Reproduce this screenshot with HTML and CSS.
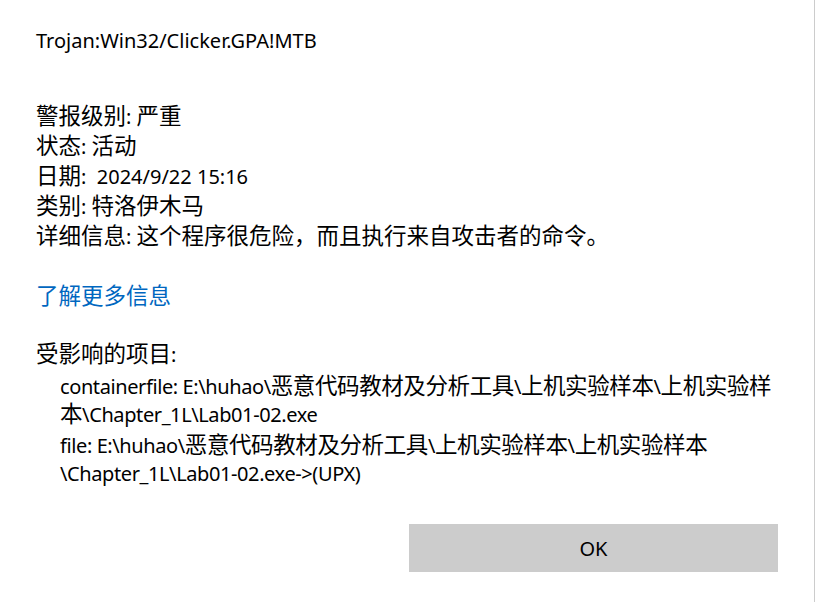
FILE: index.html
```html
<!DOCTYPE html>
<html lang="zh-CN">
<head>
<meta charset="utf-8">
<title>Windows 安全中心</title>
<link rel="stylesheet" href="styles.css">
</head>
<body>
<div class="dialog">
  <div class="title">Trojan:Win32/Clicker.GPA!MTB</div>

  <div class="details">
    <div class="row"><span class="zh">警报级别</span>: <span class="zh">严重</span></div>
    <div class="row"><span class="zh">状态</span>: <span class="zh">活动</span></div>
    <div class="row"><span class="zh">日期</span>:&nbsp; 2024/9/22 15:16</div>
    <div class="row"><span class="zh">类别</span>: <span class="zh">特洛伊木马</span></div>
    <div class="row"><span class="zh">详细信息</span>: <span class="zh">这个程序很危险，而且执行来自攻击者的命令。</span></div>
  </div>

  <a class="more" href="#"><span class="zh">了解更多信息</span></a>

  <div class="affected">
    <div class="heading"><span class="zh">受影响的项目</span>:</div>
    <div class="item">
      <div class="line">containerfile: E:\huhao\<span class="zh">恶意代码教材及分析工具</span>\<span class="zh">上机实验样本</span>\<span class="zh">上机实验样</span></div>
      <div class="line"><span class="zh">本</span>\Chapter_1L\Lab01-02.exe</div>
    </div>
    <div class="item">
      <div class="line">file: E:\huhao\<span class="zh">恶意代码教材及分析工具</span>\<span class="zh">上机实验样本</span>\<span class="zh">上机实验样本</span></div>
      <div class="line">\Chapter_1L\Lab01-02.exe-&gt;(UPX)</div>
    </div>
  </div>

  <div class="actions">
    <button class="ok" type="button">OK</button>
  </div>
</div>
</body>
</html>
```

FILE: styles.css
```css
html, body {
  margin: 0;
  padding: 0;
  background: #ffffff;
}

body {
  font-family: "Noto Sans", "Noto Sans CJK SC", sans-serif;
  font-size: 20px;
  color: #000000;
}

.dialog {
  width: 815px;
  height: 602px;
  box-sizing: border-box;
  border-right: 1px solid #cccccc;
  padding: 27px 0 0 36px;
  display: flex;
  flex-direction: column;
  align-items: flex-start;
}

.zh {
  font-family: "Noto Sans CJK SC", sans-serif;
  font-size: 22.5px;
  line-height: 1;
  text-spacing-trim: space-all;
  font-feature-settings: "halt" 0, "chws" 0;
}

.title {
  line-height: 28px;
  height: 28px;
  white-space: nowrap;
}

.details {
  margin-top: 47px;
}

.row {
  line-height: 30px;
  height: 30px;
  white-space: nowrap;
}

.more {
  margin-top: 30px;
  line-height: 30px;
  height: 30px;
  color: #0067c0;
  text-decoration: none;
}

.affected {
  margin-top: 28px;
}

.heading {
  line-height: 30px;
  height: 30px;
  white-space: nowrap;
}

.item {
  padding-left: 24px;
  margin-top: 3px;
}

.line {
  line-height: 28px;
  height: 28px;
  white-space: nowrap;
  letter-spacing: -0.4px;
}

.actions {
  align-self: stretch;
  display: flex;
  justify-content: flex-end;
  padding-right: 36px;
  margin-top: 36px;
}

.ok {
  width: 369px;
  height: 48px;
  border: none;
  background: #cccccc;
  color: #000000;
  font-family: "Noto Sans", sans-serif;
  font-size: 20px;
  padding: 0;
}
```
